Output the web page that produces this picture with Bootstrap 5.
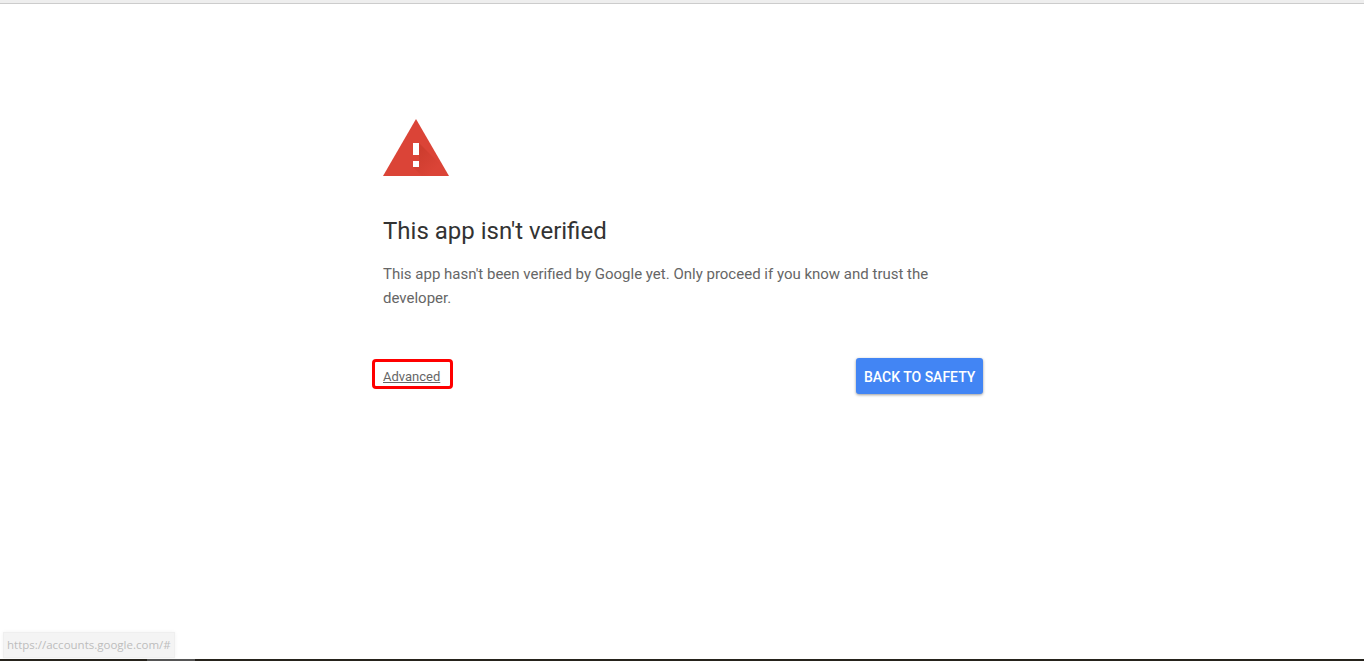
<!DOCTYPE html>
<html lang="en">
<head>
<meta charset="utf-8">
<title>This app isn't verified</title>
<link href="https://cdn.jsdelivr.net/npm/bootstrap@5.3.0/dist/css/bootstrap.min.css" rel="stylesheet">
<style>
html,body{height:100%;overflow:hidden;background:#fff}
body{font-family:Roboto,"Liberation Sans",sans-serif;position:relative}
.page-shell{height:661px}
.top-strip{height:4px;background:#eee;border-bottom:1px solid #ccc}
.warn-main{width:600px;margin-left:383px;padding-top:115px}
.warn-icon{display:block;width:66px;height:58px}
.warn-title{font-size:24px;line-height:32px;font-weight:400;color:#333;margin:38px 0 0}
.warn-text{font-size:15px;line-height:24px;color:#666;margin:15px 0 0}
.warn-actions{margin-top:48px;height:36px}
.adv-link{font-size:13px;line-height:18px;color:#666;text-decoration:underline;outline:3px solid #f00;outline-offset:0;border-radius:1px;padding:6px 10px 0 8px;margin:4px 0 0 -8px;display:inline-block}
.safe-btn{background:#4285f4;color:#fff;font-size:14px;font-weight:500;line-height:20px;padding:9px 8px 7px;border:0;border-radius:3px;box-shadow:0 1px 3px rgba(0,0,0,.4);width:127px;white-space:nowrap}
.safe-btn:hover{background:#4285f4;color:#fff}
.status-bubble{position:absolute;left:3px;top:632px;width:172px;height:26px;background:#f4f4f4;border:1px solid #efefef;color:#bdbdbd;font-family:"Open Sans","Noto Sans",sans-serif;font-size:11.5px;line-height:24px;padding-left:3px;white-space:nowrap;box-shadow:0 0 4px rgba(0,0,0,.05)}
.bottom-strip{position:absolute;left:0;right:0;top:659px;height:2px;background:#26231c}
.bottom-tab{position:absolute;left:147px;top:0;width:48px;height:2px;background:#555}
</style>
</head>
<body>
<div class="page-shell">
  <div class="top-strip"></div>
  <main class="warn-main">
    <svg class="warn-icon" viewBox="0 0 66 58" aria-hidden="true">
      <defs>
        <linearGradient id="warnShade" gradientUnits="userSpaceOnUse" x1="33" y1="36" x2="50" y2="53">
          <stop offset="0" stop-color="#a52714" stop-opacity=".25"/>
          <stop offset="1" stop-color="#a52714" stop-opacity="0"/>
        </linearGradient>
      </defs>
      <polygon points="33,0 66,57 0,57" fill="#db4437"/>
      <polygon points="36,24 60,48 60,57 39,57 30,48 30,42 36,42" fill="url(#warnShade)"/>
      <rect x="30" y="24" width="6" height="12" fill="#fff"/>
      <rect x="30" y="42" width="6" height="6" fill="#fff"/>
    </svg>
    <h1 class="warn-title">This app isn't verified</h1>
    <p class="warn-text">This app hasn't been verified by Google yet. Only proceed if you know and trust the developer.</p>
    <div class="warn-actions d-flex justify-content-between align-items-start">
      <a href="#" class="adv-link">Advanced</a>
      <button type="button" class="btn safe-btn">BACK TO SAFETY</button>
    </div>
  </main>
</div>
<div class="status-bubble">https://accounts.google.com/#</div>
<div class="bottom-strip"><div class="bottom-tab"></div></div>
<script src="https://cdn.jsdelivr.net/npm/bootstrap@5.3.0/dist/js/bootstrap.bundle.min.js"></script>
</body>
</html>
